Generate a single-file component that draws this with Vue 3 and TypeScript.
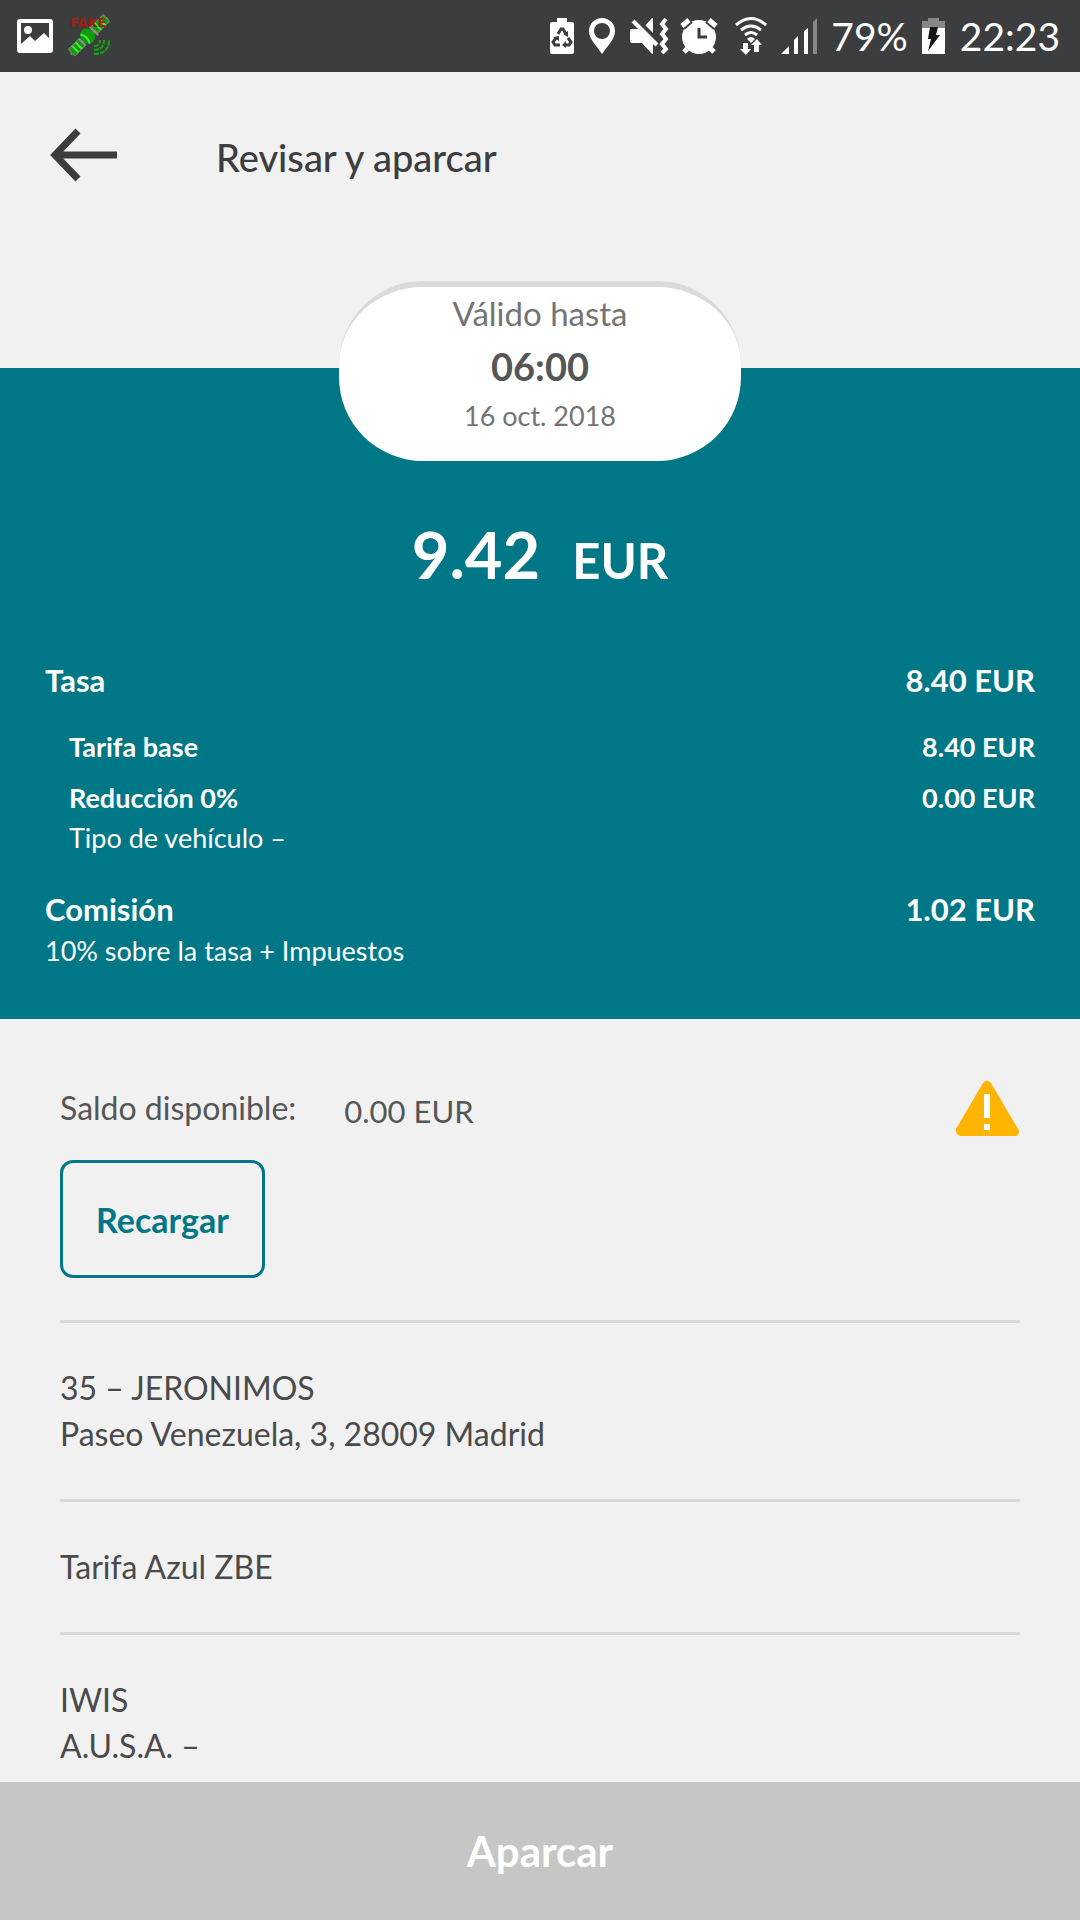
<script setup lang="ts">
interface Item {
  lines: string[]
}

const items: Item[] = [
  { lines: ['35 – JERONIMOS', 'Paseo Venezuela, 3, 28009 Madrid'] },
  { lines: ['Tarifa Azul ZBE'] },
  { lines: ['IWIS', 'A.U.S.A. –'] },
]
</script>

<template>
  <div class="page">
    <div class="status">
      <div class="group notices">
        <svg width="36" height="34" viewBox="0 0 36 34" aria-hidden="true">
          <path
            fill="#fff"
            fill-rule="evenodd"
            d="M3 0h30a3 3 0 0 1 3 3v28a3 3 0 0 1-3 3H3a3 3 0 0 1-3-3V3a3 3 0 0 1 3-3zM4 4v21l9-8 5 5 9-8 5 5V4z"
          />
          <circle cx="11" cy="11" r="4" fill="#fff" />
        </svg>
        <svg width="42" height="42" viewBox="0 0 42 42" aria-hidden="true">
          <g transform="rotate(-45 20 21)">
            <path fill="none" stroke="#8d8f8e" stroke-width="2" d="M-6 21h52" />
            <path fill="#109c0a" stroke="#6f8a6c" d="M-4 16h15v9H-4zM28 16h17v9H28z" />
            <ellipse cx="19" cy="20" rx="7" ry="8" fill="#109c0a" />
            <path fill="none" stroke="#49e83d" stroke-width="2" d="M1 16v9M6 16v9M33 16v9M39 16v9M15 14q4 6 0 13" />
            <path fill="none" stroke="#8d8f8e" stroke-width="2" d="M11 16v9M27 14v13" />
          </g>
          <path
            fill="none"
            stroke="#12a80c"
            stroke-width="2"
            stroke-dasharray="5 1"
            d="M25 31q6 0 6-6M25 35q10 0 10-10M25 39q15 0 15-14"
          />
          <text x="1" y="12" font-family="DejaVu Sans" font-weight="700" font-size="13" fill="#a31d10">FAKE</text>
        </svg>
      </div>
      <div class="group">
        <svg width="24" height="36" viewBox="0 0 24 36" aria-hidden="true">
          <path fill="#fff" d="M7 0h10v4h5q2 0 2 2v28q0 2-2 2H2q-2 0-2-2V6q0-2 2-2h5z" />
          <g fill="none" stroke="#3c3d3f" stroke-width="3">
            <path d="M8 16l3-5h2l3 5M18 20l3 4-2 3h-5M10 27H5l-2-3 3-4" />
          </g>
          <path fill="#3c3d3f" d="M18 13v6l-5-3zM16 23v7l-4-3zM3 19l6-1v5z" />
        </svg>
        <svg width="28" height="36" viewBox="0 0 28 36" aria-hidden="true">
          <path
            fill="#fff"
            fill-rule="evenodd"
            d="M14 0a13 13 0 0 1 13 13c0 8-7 14-13 23C8 27 1 21 1 13A13 13 0 0 1 14 0zm0 5a8 8 0 1 0 0 16a8 8 0 0 0 0-16z"
          />
        </svg>
        <svg width="37" height="36" viewBox="0 0 37 36" aria-hidden="true">
          <path fill="#fff" d="M1 11h8l14 14v11h-1L12 25H2q-2 0-2-2V13q0-2 1-2zM15 8l7-8h1v16z" />
          <path stroke="#3c3d3f" stroke-width="3" d="M6 0l24 24" />
          <path stroke="#fff" stroke-width="4" d="M3 3l24 24" />
          <path fill="none" stroke="#fff" stroke-width="4" d="M36 1l-4 5 4 5-4 5 4 5-4 5 4 5-4 4" />
        </svg>
        <svg width="36" height="36" viewBox="0 0 36 36" aria-hidden="true">
          <circle cx="18" cy="19" r="17" fill="#fff" />
          <path stroke="#3c3d3f" stroke-width="2" d="M3 11l8-7M25 4l8 7" />
          <path stroke="#fff" stroke-width="5" d="M1 8l7-6M28 2l7 6M3 34l5-5M33 34l-5-5" />
          <path fill="none" stroke="#3c3d3f" stroke-width="3" d="M18 10v9h8" />
        </svg>
        <svg class="wifi" width="32" height="38" viewBox="0 0 32 38" aria-hidden="true">
          <path fill="none" stroke="#fff" stroke-width="3" d="M1 8q15-13 30 0M6 13q10-8 20 0M10 18q6-5 12 0" />
          <path fill="#fff" d="M12 22q4-4 8 0l-4 4z" />
          <path fill="#fff" d="M8 26h5v6h3l-5 6-6-6h3zM19 35v-7h-3l6-6 5 6h-3v7z" />
        </svg>
        <svg width="36" height="36" viewBox="0 0 36 36" aria-hidden="true">
          <path fill="#fff" d="M8 28v8H0zM13 22l4-4v18h-4zM23 13l4-3v26h-4z" />
          <path fill="#868887" d="M32 4l4-4v36h-4z" />
        </svg>
        <span class="status-text">79%</span>
        <svg width="24" height="36" viewBox="0 0 24 36" aria-hidden="true">
          <path fill="#868887" d="M6 0h11v3h6v8H0V3h6z" />
          <path fill="#fff" d="M0 10h23v26H0z" />
          <path fill="#151515" d="M8 9h8l-2 8h4L6 33l3-12H6z" />
        </svg>
        <span class="status-text">22:23</span>
      </div>
    </div>

    <header class="appbar">
      <button class="back" type="button" aria-label="Atrás">
        <svg width="68" height="52" viewBox="0 0 68 52" aria-hidden="true">
          <path fill="none" stroke="#3c3d3f" stroke-width="7" d="M67 26H6M28 2L5 26l23 24" />
        </svg>
      </button>
      <h1>Revisar y aparcar</h1>
    </header>

    <section class="fare">
      <div class="pill">
        <span class="pill-label">Válido hasta</span>
        <strong class="pill-time">06:00</strong>
        <span class="pill-date">16 oct. 2018</span>
      </div>
      <p class="total"><span>9.42</span><span class="currency">EUR</span></p>
      <div class="row major"><span>Tasa</span><span>8.40 EUR</span></div>
      <div class="sub">
        <div class="row"><span>Tarifa base</span><span>8.40 EUR</span></div>
        <div>
          <div class="row"><span>Reducción 0%</span><span>0.00 EUR</span></div>
          <p class="note">Tipo de vehículo –</p>
        </div>
      </div>
      <div class="row major"><span>Comisión</span><span>1.02 EUR</span></div>
      <p class="note">10% sobre la tasa + Impuestos</p>
    </section>

    <main class="details">
      <section class="balance">
        <div class="balance-row">
          <span class="balance-label">Saldo disponible:</span>
          <span class="balance-value">0.00 EUR</span>
          <svg class="warning" width="64" height="56" viewBox="0 0 64 56" role="img" aria-label="Aviso">
            <path
              fill="#ffb400"
              d="M27 3Q31-2 35 3L62 49Q65 54 60 56H4Q-1 54 0 49z"
            />
            <path fill="#fff" d="M28 14h6v24h-6zM28 44h6v6h-6z" />
          </svg>
        </div>
        <button class="topup" type="button">Recargar</button>
      </section>
      <section v-for="item in items" :key="item.lines[0]" class="item">
        <p v-for="line in item.lines" :key="line">{{ line }}</p>
      </section>
    </main>

    <button class="park" type="button">Aparcar</button>
  </div>
</template>

<style>
body {
  margin: 0;
}
</style>

<style scoped>
.page {
  display: flex;
  flex-direction: column;
  min-height: 100vh;
  background: #f1f1f1;
  color: #4a4a4a;
  font-family: Lato, 'Open Sans', sans-serif;
}

svg {
  display: block;
  flex: none;
  overflow: visible;
}

p,
h1 {
  margin: 0;
}

button {
  font-family: inherit;
  cursor: pointer;
}

.status {
  display: flex;
  justify-content: space-between;
  align-items: center;
  height: 72px;
  padding: 0 20px 0 17px;
  background: #3c3d3f;
  color: #fff;
}

.group {
  display: flex;
  align-items: center;
  gap: 14px;
}

.notices {
  gap: 16px;
}

.wifi {
  margin-left: 4px;
}

.status-text {
  font-size: 39px;
  line-height: 40px;
}

.appbar {
  display: flex;
  align-items: center;
  gap: 98px;
  height: 166px;
  padding: 0 50px;
}

.back {
  padding: 0;
  border: 0;
  background: none;
}

h1 {
  padding-top: 4px;
  font-size: 38px;
  font-weight: 500;
  line-height: 48px;
  color: #3c3d3f;
}

.fare {
  margin-top: 130px;
  padding: 0 45px 50px;
  background: #007786;
  color: #fff;
}

.pill {
  display: flex;
  flex-direction: column;
  align-items: center;
  box-sizing: border-box;
  width: 402px;
  height: 180px;
  margin: -87px auto 0;
  padding-top: 3px;
  border-top: 6px solid #dadada;
  border-radius: 84px;
  background: #fff;
  color: #747474;
}

.pill-label {
  font-size: 33px;
  line-height: 46px;
}

.pill-time {
  font-size: 38px;
  line-height: 60px;
  color: #555658;
}

.pill-date {
  font-size: 27px;
  line-height: 40px;
}

.total {
  display: flex;
  justify-content: center;
  align-items: baseline;
  gap: 32px;
  margin: 53px 0 66px;
  font-size: 65px;
  font-weight: 700;
  line-height: 80px;
}

.currency {
  font-size: 49px;
  line-height: 60px;
}

.row {
  display: flex;
  justify-content: space-between;
  font-size: 27px;
  font-weight: 700;
  line-height: 36px;
}

.major {
  font-size: 31px;
  line-height: 40px;
}

.sub {
  display: flex;
  flex-direction: column;
  gap: 15px;
  margin: 29px 0 33px;
  padding-left: 24px;
}

.note {
  margin-top: 4px;
  font-size: 27px;
  line-height: 36px;
}

.details {
  padding: 0 60px 13px;
}

.balance {
  padding: 61px 0 42px;
}

.balance-row {
  display: flex;
  align-items: flex-start;
  height: 56px;
  margin-bottom: 24px;
  color: #555658;
}

.balance-label {
  margin-right: 48px;
  font-size: 32px;
  line-height: 56px;
}

.balance-value {
  font-size: 31px;
  line-height: 62px;
}

.warning {
  margin-left: auto;
}

.topup {
  height: 118px;
  padding: 0 33px;
  border: 3px solid #007786;
  border-radius: 13px;
  background: none;
  color: #007786;
  font-size: 34px;
  font-weight: 700;
}

.item {
  padding: 42px 0;
  border-top: 3px solid #d8d8d8;
  font-size: 32px;
  line-height: 46px;
}

.item:last-child {
  padding-bottom: 0;
}

.park {
  height: 138px;
  margin-top: auto;
  border: 0;
  background: #c6c6c6;
  color: #fff;
  font-size: 42px;
  font-weight: 700;
}
</style>
